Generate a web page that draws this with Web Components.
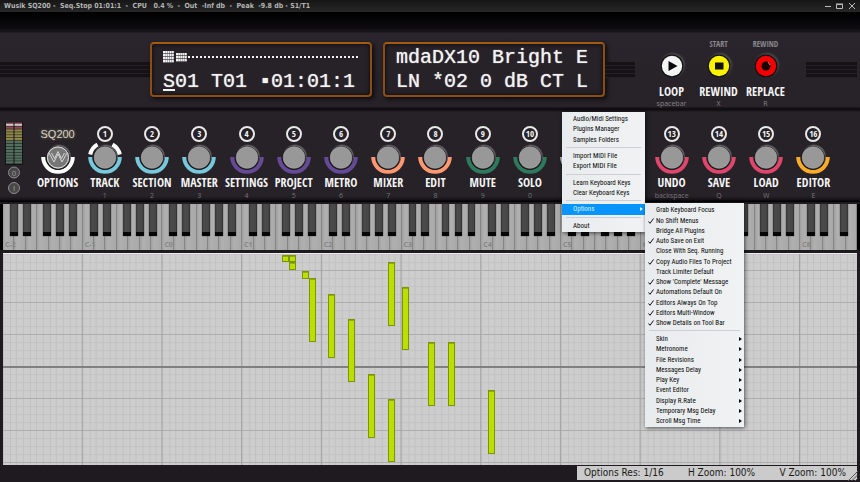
<!DOCTYPE html>
<html lang="en">
<head>
<meta charset="utf-8">
<title>Wusik SQ200</title>
<style>
html{height:100%}
body{margin:0;min-height:100%;display:flex;background:#1e1a20}
sq-app{flex:1}
</style>
</head>
<body>
<sq-app></sq-app>
<script>
const define=(name,css,render)=>customElements.define(name,class extends HTMLElement{
  constructor(){super();this.attachShadow({mode:'open'});}
  connectedCallback(){this.shadowRoot.innerHTML=`<style>*{box-sizing:border-box}button{font:inherit;color:inherit;background:none;border:0;padding:0;margin:0}${css}</style>${render(this)}`;}
});
const COND='"Open Sans Condensed","Roboto Condensed",sans-serif';

define('sq-titlebar',`
:host{display:flex;align-items:center;height:12px;padding:0 3px 0 4px;background:linear-gradient(#161616,#272727);color:#b4b4b4;font:bold 7px/12px "DejaVu Sans Condensed","DejaVu Sans",sans-serif}
.t{white-space:pre;flex:1}
nav{display:flex;gap:2px}
button{width:10px;height:12px;display:block}
svg{display:block;width:10px;height:12px;fill:none;stroke:#bbb}
`,()=>`<span class="t">Wusik SQ200 -  Seq.Stop 01:01:1  -  CPU   0.4 %  -  Out  -Inf db  -  Peak  -9.8 db - S1/T1</span>
<nav><button aria-label="Minimize"><svg viewBox="0 0 10 12"><path d="M2 6.5h6"/></svg></button><button aria-label="Maximize"><svg viewBox="0 0 10 12"><path d="M1.5 4.5h6v4h-6zM1 4h7"/></svg></button><button aria-label="Close"><svg viewBox="0 0 10 12"><path d="M2 3l6 6M8 3l-6 6"/></svg></button></nav>`);

define('sq-vents',`
:host{display:block;height:16px;margin-top:31px;background:repeating-linear-gradient(#141215 0 3px,#242026 3px 4px)}
`,()=>'');

define('sq-lcd',`
:host{display:flex;flex-direction:column;justify-content:space-between;width:222px;height:55px;padding:3px 6px 3px 11px;border:2px solid #8a4d14;border-top-color:#a35a12;border-radius:4px;background:#262228;box-shadow:inset 0 0 4px #0a080b,2px 2px 4px #0d0b0e;color:#f2f2f2}
`,()=>`<slot></slot>`);

define('sq-lcd-line',`
:host{display:block;height:21px;font:20px/21px "Liberation Mono",monospace;white-space:pre;text-shadow:0 0 1px #ddd}
::slotted(u){text-decoration:underline 2px;text-underline-offset:2px}
`,()=>`<slot></slot>`);

define('sq-lcd-graph',`
:host{display:block;height:21px;padding-top:4px}
svg{display:block;width:200px;height:16px;fill:#f0f0f0}
`,()=>{let r='';
 for(let i=0;i<4;i++)for(let j=0;j<5;j++)r+=`<rect x="${j*2.200}" y="${i*3}" width="2" height="2.400"/>`;
 for(let i=0;i<3;i++)for(let j=0;j<5;j++)r+=`<rect x="${13+j*2.200}" y="${2+i*3}" width="2" height="2.400"/>`;
 for(let i=0;i<43;i++)r+=`<rect x="${25+i*4}" y="5" width="2" height="2"/>`;
 return `<svg viewBox="0 0 200 16">${r}</svg>`;});

define('sq-transport-button',`
:host{display:block;flex:1;text-align:center}
button{display:flex;flex-direction:column;align-items:center;width:100%}
.top{height:12px;font:bold 8px/12px ${COND};color:#8b878c}
svg{display:block;width:24px;height:24px;margin:4px 0 7px;filter:drop-shadow(1px -1px 1px #555)}
.name{font:bold 12px/14px ${COND};color:#f4f4f4}
.key{height:9px;font:7px/9px "Open Sans",sans-serif;color:#868287}
`,e=>{const k=e.getAttribute('kind');
 const col={loop:'#f4f4f4',rewind:'#fbf200',replace:'#f50000'}[k];
 const g={loop:'<path d="M8.500 7v10l9-5z" fill="#0a0a0a"/>',rewind:'<path d="M8 8.500h8.500v7h-8.500z" fill="#111"/>',replace:'<circle cx="12" cy="12" r="4.500" fill="#150000"/><path d="M14 8.500a4.300 4.300 0 0 1 2 2.500" fill="none" stroke="#e99"/>'}[k];
 return `<button><span class="top">${e.getAttribute('top')||''}</span><svg viewBox="0 0 24 24"><circle cx="12" cy="12" r="11.500" fill="#141115"/><circle cx="12" cy="12" r="10.200" fill="${col}"/>${g}</svg><span class="name"><slot></slot></span><span class="key">${e.getAttribute('key')}</span></button>`;});

define('sq-header',`
:host{display:flex;height:98px;padding:30px 3px 0 0;background:linear-gradient(#000,#0d0b0e 17px,#171418 18px,#171418 20px,#2a252c 21px,#262228 95px,#100e11 96px)}
.l{flex:1 1 150px}.m{flex:none;width:30px;margin-right:13px}.r{flex:1 1 51px;margin-left:17px}
sq-lcd+sq-lcd{margin-left:11px}
.tr{display:flex;width:141px;margin-top:-4px}
sq-vents{margin-top:20px}
`,()=>`<sq-vents class="l"></sq-vents>
<sq-lcd><sq-lcd-graph></sq-lcd-graph><sq-lcd-line><u>S</u>01 T01 ▪01:01:1</sq-lcd-line></sq-lcd>
<sq-lcd><sq-lcd-line>mdaDX10 Bright E</sq-lcd-line><sq-lcd-line>LN *02 0 dB CT L</sq-lcd-line></sq-lcd>
<sq-vents class="m"></sq-vents>
<div class="tr"><sq-transport-button kind="loop" key="spacebar">LOOP</sq-transport-button><sq-transport-button kind="rewind" top="START" key="X">REWIND</sq-transport-button><sq-transport-button kind="replace" top="REWIND" key="R">REPLACE</sq-transport-button></div>
<sq-vents class="r"></sq-vents>`);

define('sq-meter',`
:host{display:flex;flex-direction:column;align-items:center;width:34px;padding:12px 6px 0 0}
svg{display:block;width:18px;height:74px}
text{font:8px "Liberation Sans",sans-serif;text-anchor:middle;fill:#999}
`,()=>{let r='';
 for(let i=0;i<14;i++){const c=i<1?'#c9c3c3':i<2?'#8d4a58':i<6?'#8c8648':'#53705f';for(const x of [1,9.5])r+=`<rect x="${x}" y="${i*2.9+1.5}" width="7.500" height="2.400" fill="${c}"/>`;}
 return `<svg viewBox="0 0 18 74"><rect x="0" y="0" width="18" height="43" fill="#151216"/><path d="M1 .5h16" stroke="#6e1c26"/>${r}
 <g fill="#4a4749" stroke="#8f8c8f"><circle cx="9" cy="50.500" r="5.500"/><circle cx="9" cy="66" r="5.500"/></g><text x="9" y="53.500">0</text><text x="9" y="69">I</text></svg>`;});

define('sq-knob',`
:host{display:block;min-width:0}
button{display:flex;flex-direction:column;align-items:center;width:100%}
.num{display:block;width:16px;height:16px;border:2px solid #e9e9e9;border-radius:50%;font:bold 9px/12px ${COND};color:#f2f2f2;text-align:center}
.brand{height:16px;font:11px/16px "Liberation Sans",sans-serif;color:#d6d1c2;text-shadow:0 0 3px #8d8468}
svg{display:block;width:38px;height:33px}
.name{height:16px;font:bold 12px/16px ${COND};color:#f4f4f4}
.key{height:9px;font:7px/9px "Open Sans",sans-serif;color:#77737a}
`,e=>{const n=e.getAttribute('num'),c=e.getAttribute('color'),m=e.getAttribute('mark');
 const head=m==='blank'?'<span class="num"></span>':n?`<span class="num">${n}</span>`:'<span class="brand">SQ200</span>';
 return `<button aria-label="${e.textContent||'Bank'}">${head}
<svg viewBox="0 0 38 33"><defs><radialGradient id="g"><stop offset=".8" stop-color="#8a8889"/><stop offset="1" stop-color="#262228"/></radialGradient></defs>
<circle cx="20" cy="14.500" r="12.500" fill="url(#g)"/>
<path d="M4.200 15a14.800 14.800 0 0 0 29.600 0" fill="none" stroke="${c}" stroke-width="4"/>
${m==='track'?'<path d="M4.200 12.500A15 15 0 0 1 11.500 2.500M33.800 12.500A15 15 0 0 0 26.500 2.500" fill="none" stroke="#fff" stroke-width="4"/>':''}
<circle cx="19" cy="16" r="11.900" fill="#1c191d"/><circle cx="19" cy="15.500" r="10.800" fill="#989898" stroke="#aaa" stroke-width=".6"/>
${m==='logo'?'<circle cx="19" cy="15.500" r="10.500" fill="#777" stroke="#ddd"/><path d="M10 11l5 9 4-8 4 8 5-9M12.500 11l3 5.500 3.500-7 3.500 7 3-5.500" fill="none" stroke="#d5d5d5"/>':''}</svg>
<span class="name"><slot></slot></span><span class="key">${e.getAttribute('key')||''}</span></button>`;});

define('sq-controls',`
:host{display:flex;height:92px;padding-right:23px;background:linear-gradient(#100e11,#262228 2px,#262228 86px,#151216 90px,#000 91px)}
.k{flex:1;display:grid;grid-template-columns:repeat(17,minmax(0,1fr));padding-top:16px}
`,()=>{const C='#76c8dc',P='#654a97',O='#ff9871',G='#2d7a5c',R='#e0466b',Y='#fbab28',S='#c8c8c8';
 const L=[['','#fff','OPTIONS','','logo'],[1,C,'TRACK','1','track'],[2,C,'SECTION','2'],[3,C,'MASTER','3'],[4,P,'SETTINGS','4'],[5,P,'PROJECT','5'],[6,P,'METRO','6'],[7,O,'MIXER','7'],[8,O,'EDIT','8'],[9,G,'MUTE','9'],[10,G,'SOLO','0'],['',S,'','','blank'],['',S,'','','blank'],[13,R,'UNDO','backspace'],[14,R,'SAVE','Q'],[15,R,'LOAD','W'],[16,Y,'EDITOR','E']];
 return `<sq-meter></sq-meter><div class="k">${L.map(a=>`<sq-knob num="${a[0]}" color="${a[1]}" key="${a[3]}" mark="${a[4]||''}">${a[2]}</sq-knob>`).join('')}</div>`;});

define('sq-octave',`
:host{display:flex;position:relative;min-width:0}
.w{flex:1;min-width:0;height:100%;border-right:1px solid #858585;background:linear-gradient(90deg,#a0a0a0,#b0b0b0 3px,#a9a9a9)}
.b{position:absolute;top:0;width:10%;height:32px;background:linear-gradient(90deg,#333,#4b4b4b 2px,#474747 80%,#2c2c2c);border-bottom:4px solid #060606;box-shadow:0 0 1px #333}
label{position:absolute;left:2px;bottom:1px;font:bold 7px/9px "Open Sans",sans-serif;color:#868686}
`,e=>{const n=+e.getAttribute('keys');
 return Array.from({length:n},()=>'<button class="w" tabindex="-1" aria-label="White key"></button>').join('')+[8.8,25,50.2,66.5,82.8].slice(0,n<7?3:5).map(p=>`<button class="b" style="left:${n<7?p*7/n:p}%;${n<7?'width:14%':''}" tabindex="-1" aria-label="Black key"></button>`).join('')+`<label>${e.getAttribute('name')}</label>`;});

define('sq-keyboard',`
:host{display:flex;height:46px;border:solid #000;border-width:0 3px 0 3px;box-shadow:inset 0 1px #888}
`,()=>Array.from({length:11},(_,i)=>`<sq-octave style="flex:${i<10?7:5} 1 0" name="C${i-2}" keys="${i<10?7:5}"></sq-octave>`).join(''));

define('sq-roll',`
:host{display:block;position:relative;flex:1;margin:3px 3px 0;border-top:1px solid #eee;
background:linear-gradient(#808080,#808080) 0 112px/100% 2px no-repeat,
linear-gradient(90deg,transparent calc(100% - 1px),#a2a2a2 0) 0 0/9.3333% 100%,
linear-gradient(#aeaeae 1px,transparent 1px) 0 16px/100% 32px,
repeating-linear-gradient(90deg,#c1c1c1 0 1px,transparent 1px 8.333%) 0 0/9.3333% 100%,
linear-gradient(#c4c4c4 1px,transparent 1px) 0 0/100% 8px,#cdcdcd}
i{position:absolute;width:.78%;min-width:7px;background:#bbe000;border:1px solid #7c9508;box-shadow:inset 0 1px #91ad08}
`,()=>[[42,1,7],[43,1,7],[43,8,8],[45,17,8],[46,24,64],[49,40,64],[52,65,63],[55,120,64],[58,8,64],[58,145,63],[60,33,63],[64,88,64],[67,88,64],[73,136,64]].map(([k,y,h])=>`<i style="left:calc(100% * ${k} * 7 / 900);top:${y}px;height:${h}px"></i>`).join(''));

define('sq-status',`
:host{display:flex;position:relative;justify-content:space-between;width:280px;height:14px;margin:1px 3px 2px auto;padding:0 11px 0 7px;background:#cbcbcb;color:#1a1a1a;font:10px/14px "DejaVu Sans Condensed","DejaVu Sans",sans-serif}
svg{position:absolute;right:-1px;bottom:-1px;width:10px;height:10px}
`,()=>`<span>Options Res: 1/16</span><span>H Zoom: 100%</span><span>V Zoom: 100%</span><svg viewBox="0 0 10 10" stroke="#555"><path d="M0 10L10 0M3.500 10L10 3.500M7 10L10 7"/></svg>`);

define('sq-menu',`
:host{display:flex;flex-direction:column;padding:2px 0 1px;background:linear-gradient(90deg,#e9ecee,#f0f2f3);box-shadow:1px 1px 4px #0009;font:7px/10px "Roboto Condensed",Roboto,sans-serif;color:#0a0a0a}
`,()=>`<slot></slot>`);
define('sq-menu-line',`
:host{display:block;flex:none;height:6px;padding:2px 4px}
hr{margin:0;border:0;border-top:1px solid #cdd0d2}
`,()=>'<hr>');
define('sq-menu-item',`
:host{display:flex;flex:1;min-height:10px;position:relative}
:host([open]){background:#0795fb;color:#d9f0ff}
button{flex:1;display:flex;align-items:center;padding:0 2px 0 11px;white-space:nowrap;text-align:left;position:relative}
.l{flex:1}
.c{position:absolute;left:3px;width:6px;height:6px}
.a{width:3px;height:4px}
::slotted(sq-menu){position:absolute;left:100%;top:-1px;width:99px;min-height:224px}
`,e=>`<button>${e.hasAttribute('checked')?'<svg class="c" viewBox="0 0 6 6" fill="none" stroke="#111"><path d="M.5 3.500L2 5.300L5.500 .5"/></svg>':''}<span class="l">${e.getAttribute('label')}</span>${e.hasAttribute('more')?'<svg class="a" viewBox="0 0 3 4" fill="currentColor"><path d="M0 0v4l3-2z"/></svg>':''}</button><slot></slot>`);

define('sq-app',`
:host{display:flex;flex-direction:column;position:relative}
.main{position:absolute;left:562px;top:112px;width:83px;min-height:120px}
sq-keyboard{margin-top:2px}
`,()=>{
 const item=(l,x='')=>`<sq-menu-item label="${l}" ${x}></sq-menu-item>`,line='<sq-menu-line></sq-menu-line>';
 const sub=['Grab Keyboard Focus','*No Shift Menus','Bridge All Plugins','*Auto Save on Exit','Close With Seq. Running','*Copy Audio Files To Project','Track Limiter Default',"*Show 'Complete' Message",'*Automations Default On','*Editors Always On Top','*Editors Multi-Window','*Show Details on Tool Bar'].map(s=>s[0]==='*'?item(s.slice(1),'checked'):item(s)).join('')+line+['Skin','Metronome','File Revisions','Messages Delay','Play Key','Event Editor','Display R.Rate','Temporary Msg Delay','Scroll Msg Time'].map(s=>item(s,'more')).join('');
 return `<sq-titlebar></sq-titlebar><sq-header></sq-header><sq-controls></sq-controls><sq-keyboard></sq-keyboard><sq-roll></sq-roll><sq-status></sq-status>
<sq-menu class="main">${item('Audio/Midi Settings')}${item('Plugins Manager')}${item('Samples Folders')}${line}${item('Import MIDI File')}${item('Export MIDI File')}${line}${item('Learn Keyboard Keys')}${item('Clear Keyboard Keys')}${line}<sq-menu-item label="Options" more open><sq-menu>${sub}</sq-menu></sq-menu-item>${line}${item('About')}</sq-menu>`;});
</script>
</body>
</html>
